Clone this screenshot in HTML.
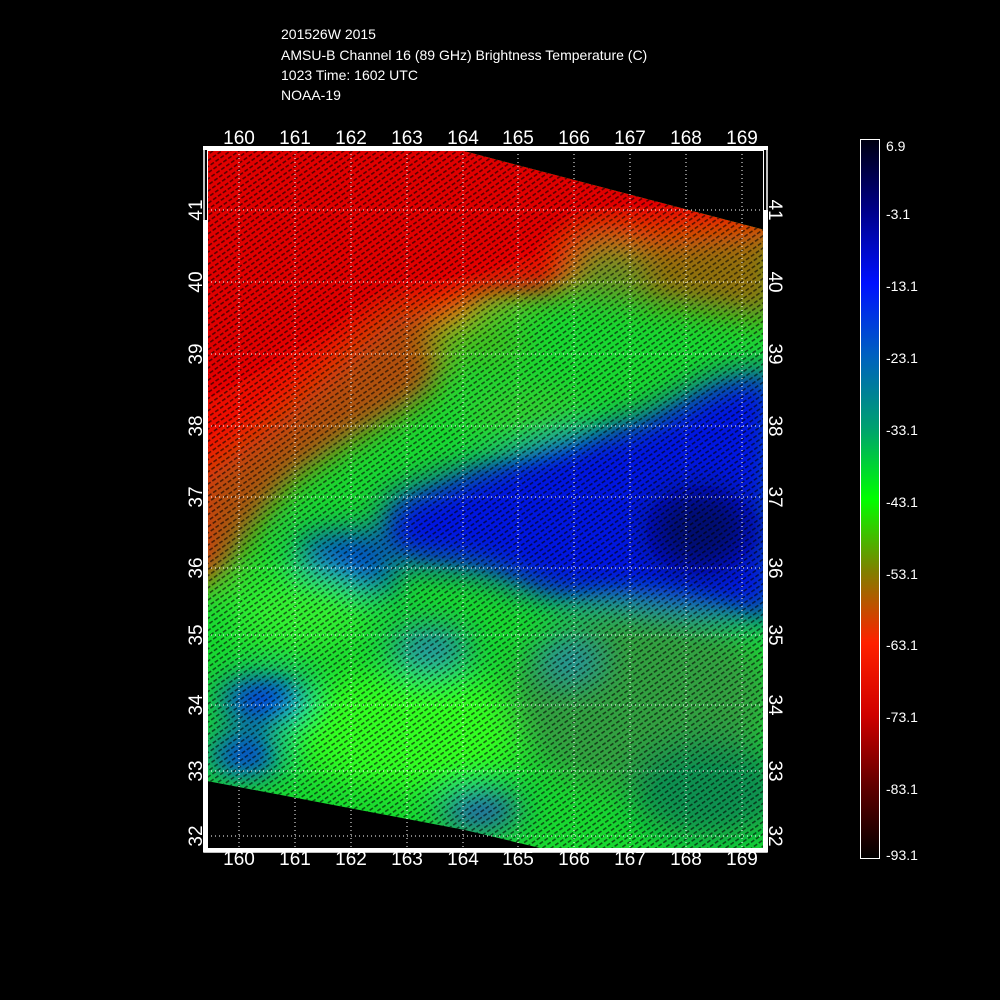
<!DOCTYPE html>
<html><head><meta charset="utf-8"><style>
html,body{margin:0;padding:0;background:#000;width:1000px;height:1000px;overflow:hidden}
svg{display:block}
text{font-family:"Liberation Sans",sans-serif;fill:#fff}
</style></head><body>
<svg width="1000" height="1000" viewBox="0 0 1000 1000" xmlns="http://www.w3.org/2000/svg">
<defs>
<clipPath id="sw"><polygon points="207,150 460,150 765,230 765,848 540,848 465,830 207,781"/></clipPath>
<filter id="b1" x="-50%" y="-50%" width="200%" height="200%"><feGaussianBlur stdDeviation="16"/></filter>
<pattern id="h" width="6" height="5" patternUnits="userSpaceOnUse" patternTransform="rotate(-35)">
<rect width="4" height="1.6" fill="#000" opacity="0.6"/></pattern>
<linearGradient id="cb" x1="0" y1="0" x2="0" y2="1">
<stop offset="0" stop-color="#000010"/>
<stop offset="0.1" stop-color="#00008a"/>
<stop offset="0.2" stop-color="#0010ff"/>
<stop offset="0.3" stop-color="#0060c0"/>
<stop offset="0.4" stop-color="#00a070"/>
<stop offset="0.5" stop-color="#00ff00"/>
<stop offset="0.6" stop-color="#808000"/>
<stop offset="0.7" stop-color="#ff2000"/>
<stop offset="0.8" stop-color="#d00000"/>
<stop offset="0.9" stop-color="#600000"/>
<stop offset="1" stop-color="#000"/>
</linearGradient>
</defs>
<g clip-path="url(#sw)">
<rect x="200" y="140" width="580" height="720" fill="#18d830"/>
<g filter="url(#b1)">
<path d="M150,100 L800,100 L800,230 L640,245 L560,290 L480,300 L420,370 L340,430 L270,500 L210,580 L150,600Z" fill="#f01000"/>
<path d="M150,100 L800,100 L800,200 L640,220 L520,260 L430,290 L300,350 L150,430Z" fill="#e00000"/>
<path d="M570,250 L780,230 L780,320 L640,300Z" fill="#907010"/>
<path d="M400,310 L470,330 L420,400 L350,440 L290,480 L250,530 L220,580 L200,560 L200,480 L280,420Z" fill="#b05010"/>
<path d="M390,500 L470,470 L560,440 L640,420 L720,380 L780,370 L780,620 L700,610 L620,600 L560,600 L480,570 L400,560 L380,540Z" fill="#0018e0"/>
<path d="M300,540 L370,530 L400,590 L340,590 L300,575Z" fill="#0040d0"/>
<ellipse cx="700" cy="530" rx="55" ry="45" fill="#001070"/>
<ellipse cx="265" cy="700" rx="45" ry="22" fill="#0030f0"/>
<ellipse cx="245" cy="755" rx="35" ry="20" fill="#0030f0"/>
<ellipse cx="300" cy="610" rx="70" ry="40" fill="#30f030"/>
<ellipse cx="410" cy="730" rx="120" ry="60" fill="#30ff20"/>
<ellipse cx="640" cy="700" rx="130" ry="90" fill="#30a040"/>
<ellipse cx="710" cy="790" rx="80" ry="50" fill="#109050"/>
<ellipse cx="480" cy="810" rx="40" ry="18" fill="#2050c0"/>
<ellipse cx="430" cy="650" rx="40" ry="25" fill="#2090a0"/>
<ellipse cx="570" cy="660" rx="30" ry="20" fill="#2090a0"/>
<ellipse cx="520" cy="410" rx="60" ry="25" fill="#30d030"/>
<ellipse cx="480" cy="340" rx="50" ry="25" fill="#40c020"/>
<ellipse cx="610" cy="270" rx="40" ry="30" fill="#709020"/>
</g>
<rect x="200" y="140" width="580" height="720" fill="url(#h)"/>
</g>
<g stroke="#fff" stroke-width="1" stroke-dasharray="1,3" fill="none">
<path d="M239,150V848M295,150V848M351,150V848M407,150V848M463,150V848M518,150V848M574,150V848M630,150V848M686,150V848M742,150V848"/>
<path d="M207,210H765M207,282H765M207,354H765M207,426H765M207,497H765M207,568H765M207,635H765M207,705H765M207,771H765M207,836H765"/>
</g>
<g stroke="#fff" fill="none">
<rect x="204" y="147" width="563" height="705" stroke-width="1.5"/>
<rect x="207.5" y="150.5" width="556" height="698" stroke-width="1"/>
</g>
<rect x="203" y="146" width="565" height="4" fill="#fff"/>
<rect x="203" y="848" width="565" height="4" fill="#fff"/>
<rect x="203" y="220" width="4" height="632" fill="#fff"/>
<rect x="764" y="210" width="4" height="642" fill="#fff"/>
<g font-size="19" text-anchor="middle">
<text x="239" y="144">160</text><text x="295" y="144">161</text><text x="351" y="144">162</text><text x="407" y="144">163</text><text x="463" y="144">164</text><text x="518" y="144">165</text><text x="574" y="144">166</text><text x="630" y="144">167</text><text x="686" y="144">168</text><text x="742" y="144">169</text>
<text x="239" y="865">160</text><text x="295" y="865">161</text><text x="351" y="865">162</text><text x="407" y="865">163</text><text x="463" y="865">164</text><text x="518" y="865">165</text><text x="574" y="865">166</text><text x="630" y="865">167</text><text x="686" y="865">168</text><text x="742" y="865">169</text>
</g>
<g font-size="19" text-anchor="middle">
<text transform="translate(202,210) rotate(-90)">41</text><text transform="translate(202,282) rotate(-90)">40</text><text transform="translate(202,354) rotate(-90)">39</text><text transform="translate(202,426) rotate(-90)">38</text><text transform="translate(202,497) rotate(-90)">37</text><text transform="translate(202,568) rotate(-90)">36</text><text transform="translate(202,635) rotate(-90)">35</text><text transform="translate(202,705) rotate(-90)">34</text><text transform="translate(202,771) rotate(-90)">33</text><text transform="translate(202,836) rotate(-90)">32</text>
<text transform="translate(769,210) rotate(90)">41</text><text transform="translate(769,282) rotate(90)">40</text><text transform="translate(769,354) rotate(90)">39</text><text transform="translate(769,426) rotate(90)">38</text><text transform="translate(769,497) rotate(90)">37</text><text transform="translate(769,568) rotate(90)">36</text><text transform="translate(769,635) rotate(90)">35</text><text transform="translate(769,705) rotate(90)">34</text><text transform="translate(769,771) rotate(90)">33</text><text transform="translate(769,836) rotate(90)">32</text>
</g>
<g font-size="14">
<text x="281" y="39">201526W 2015</text>
<text x="281" y="60">AMSU-B Channel 16 (89 GHz) Brightness Temperature (C)</text>
<text x="281" y="80">1023 Time: 1602 UTC</text>
<text x="281" y="100">NOAA-19</text>
</g>
<rect x="860.5" y="139.5" width="19" height="719" fill="url(#cb)" stroke="#fff" stroke-width="1"/>
<g font-size="14">
<text x="886" y="151">6.9</text><text x="886" y="219">-3.1</text><text x="886" y="291">-13.1</text><text x="886" y="363">-23.1</text><text x="886" y="435">-33.1</text><text x="886" y="507">-43.1</text><text x="886" y="579">-53.1</text><text x="886" y="650">-63.1</text><text x="886" y="722">-73.1</text><text x="886" y="794">-83.1</text><text x="886" y="860">-93.1</text>
</g>
</svg>
</body></html>
